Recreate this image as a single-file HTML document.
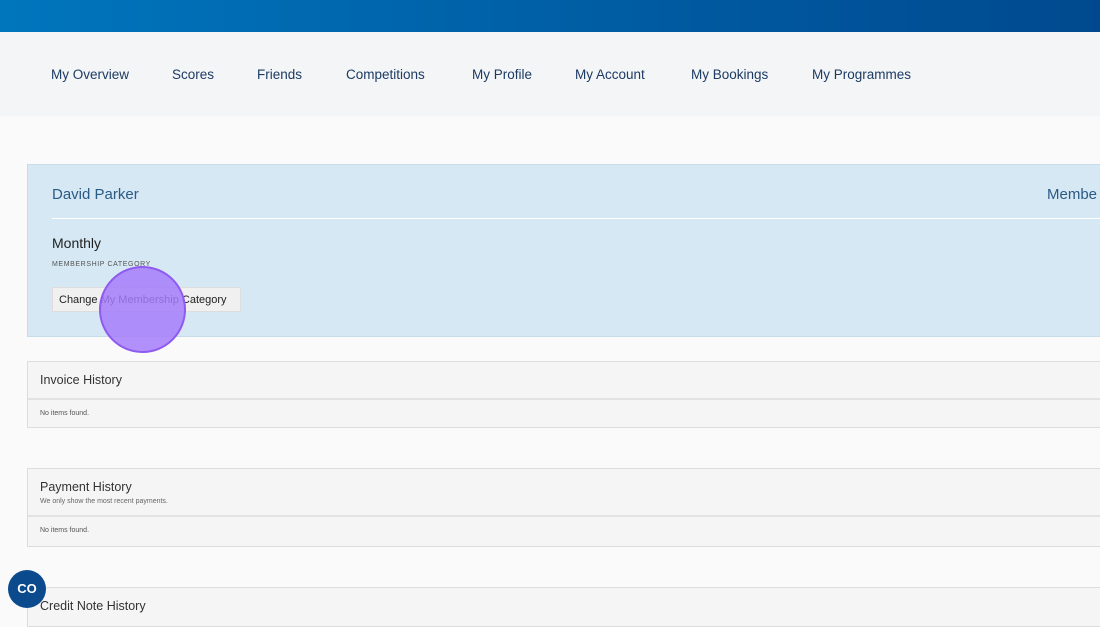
<!DOCTYPE html>
<html><head><style>
*{margin:0;padding:0;box-sizing:border-box}
body{width:1100px;height:616px;overflow:hidden;background:#fafafa;font-family:"Liberation Sans",sans-serif;position:relative}
.top{position:absolute;left:0;top:0;width:1100px;height:32px;background:linear-gradient(90deg,#0076bd,#005fa6 50%,#00498f)}
.nav{position:absolute;left:0;top:32px;width:1100px;height:84px;background:#f3f5f7}
.nav span{position:absolute;top:35px;font-size:13.5px;color:#1d3a63}
.card{position:absolute;left:27px;top:164px;width:1080px;height:173px;background:#d5e8f4;border:1px solid #c8dcea}
.name{position:absolute;left:24px;top:21px;font-size:15px;color:#2b5a85}
.memb{position:absolute;left:1019px;top:21px;font-size:15px;color:#2b5a85}
.hr{position:absolute;left:24px;top:53px;width:1060px;height:1px;background:#fff}
.monthly{position:absolute;left:24px;top:70px;font-size:14px;color:#222}
.cat{position:absolute;left:24px;top:96px;font-size:7px;letter-spacing:.6px;color:#555}
.btn{position:absolute;left:24px;top:122px;width:189px;height:25px;background:#f0f0f0;border:1px solid #ddd;font-size:11px;color:#222;padding:6px 0 0 6px}
.circ{position:absolute;left:99px;top:266px;width:87px;height:87px;border-radius:50%;background:rgba(165,125,250,.85);border:2px solid #8f5af0}
.panel{position:absolute;left:27px;width:1080px;background:#f5f5f5;border:1px solid #ddd}
.panel .h{font-size:12.5px;color:#333;padding-left:12px}
.panel .sub{font-size:7px;color:#666;padding-left:12px}
.panel .b{border-top:2px solid #e2e2e2;font-size:7px;color:#555;padding-left:12px}
.fab{position:absolute;left:8px;top:570px;width:38px;height:38px;border-radius:50%;background:#0b4a8c;color:#fff;font-size:13px;font-weight:bold;text-align:center;line-height:38px}
</style></head><body>
<div class="top"></div>
<div class="nav">
<span style="left:51px">My Overview</span><span style="left:172px">Scores</span><span style="left:257px">Friends</span><span style="left:346px">Competitions</span><span style="left:472px">My Profile</span><span style="left:575px">My Account</span><span style="left:691px">My Bookings</span><span style="left:812px">My Programmes</span>
</div>
<div class="card">
<div class="name">David Parker</div><div class="memb">Membe</div>
<div class="hr"></div>
<div class="monthly">Monthly</div>
<div class="cat">MEMBERSHIP CATEGORY</div>
<div class="btn">Change My Membership Category</div>
</div>
<div class="circ"></div>
<div class="panel" style="top:361px;height:67px">
<div class="h" style="height:36px;padding-top:11px">Invoice History</div>
<div class="b" style="height:29px;padding-top:10px">No items found.</div>
</div>
<div class="panel" style="top:468px;height:79px">
<div class="h" style="padding-top:11px">Payment History</div>
<div class="sub" style="height:21px;padding-top:4px">We only show the most recent payments.</div>
<div class="b" style="height:29px;padding-top:10px">No items found.</div>
</div>
<div class="panel" style="top:587px;height:40px">
<div class="h" style="padding-top:11px">Credit Note History</div>
</div>
<div class="fab">CO</div>
</body></html>
